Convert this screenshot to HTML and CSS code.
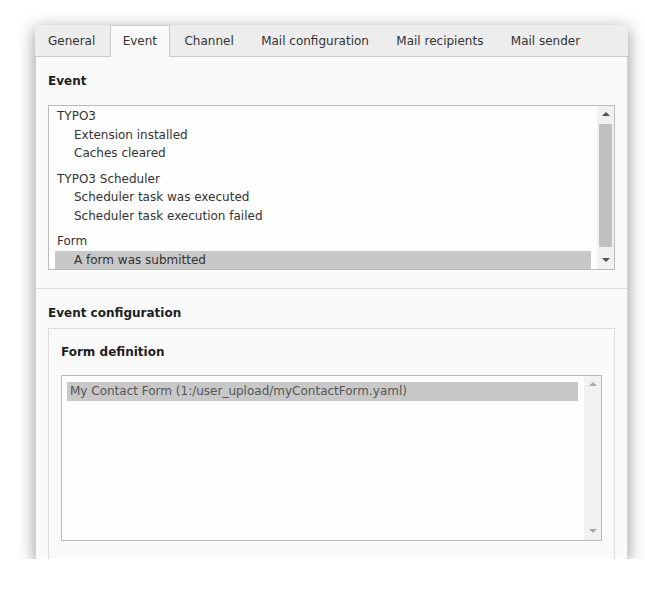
FILE: index.html
```html
<!DOCTYPE html>
<html lang="en">
<head>
<meta charset="utf-8">
<title>Notification</title>
<link rel="stylesheet" href="styles.css">
</head>
<body>
<div class="panel">
  <div class="tabs">
    <div class="tab">General</div>
    <div class="tab active">Event</div>
    <div class="tab">Channel</div>
    <div class="tab">Mail configuration</div>
    <div class="tab">Mail recipients</div>
    <div class="tab">Mail sender</div>
  </div>
  <div class="content">
    <div class="section">
      <div class="label">Event</div>
      <div class="select select-events">
        <div class="list list-events">
          <div class="group">
            <div class="group-label">TYPO3</div>
            <div class="option">Extension installed</div>
            <div class="option">Caches cleared</div>
          </div>
          <div class="group">
            <div class="group-label">TYPO3 Scheduler</div>
            <div class="option">Scheduler task was executed</div>
            <div class="option">Scheduler task execution failed</div>
          </div>
          <div class="group">
            <div class="group-label">Form</div>
            <div class="option selected">A form was submitted</div>
          </div>
        </div>
        <div class="scrollbar">
          <div class="sb-btn up"><svg width="8" height="4" viewBox="0 0 8 4"><path d="M0 4L4 0L8 4Z"/></svg></div>
          <div class="sb-track"><div class="sb-thumb"></div></div>
          <div class="sb-btn down"><svg width="8" height="4" viewBox="0 0 8 4"><path d="M0 0L8 0L4 4Z"/></svg></div>
        </div>
      </div>
    </div>
    <div class="section section-config">
      <div class="label label-section">Event configuration</div>
      <div class="fieldset">
        <div class="label label-field">Form definition</div>
        <div class="select select-form">
          <div class="list list-form">
            <div class="form-option selected">My Contact Form (1:/user_upload/myContactForm.yaml)</div>
          </div>
          <div class="scrollbar scrollbar-disabled">
            <div class="sb-btn up"><svg width="8" height="4" viewBox="0 0 8 4"><path d="M0 4L4 0L8 4Z"/></svg></div>
            <div class="sb-track"></div>
            <div class="sb-btn down"><svg width="8" height="4" viewBox="0 0 8 4"><path d="M0 0L8 0L4 4Z"/></svg></div>
          </div>
        </div>
      </div>
    </div>
  </div>
</div>
</body>
</html>
```

FILE: styles.css
```css
* {
  box-sizing: border-box;
}

body {
  margin: 0;
  background: #ffffff;
  font-family: "DejaVu Sans", Verdana, sans-serif;
  font-size: 12px;
  color: #333333;
}

.panel {
  margin: 25px 0 0 35px;
  width: 593px;
  height: 534px;
  display: flex;
  flex-direction: column;
  overflow: hidden;
  background: #fafafa;
  box-shadow: 0 4px 16px rgba(0, 0, 0, 0.42);
}

.tabs {
  display: flex;
  background: #ededed;
  border-bottom: 1px solid #c8c8c8;
}

.tab {
  border: 1px solid transparent;
  border-bottom: 0;
  margin-bottom: -1px;
  margin-right: 1.4px;
  padding: 0 12px 1px;
  line-height: 30px;
  color: #333333;
  white-space: nowrap;
}

.tab.active {
  background: #fafafa;
  border-color: #cdcdcd;
}

.content {
  flex: 1;
  border-left: 1px solid #d2d2d2;
  border-right: 1px solid #d2d2d2;
}

.section {
  padding: 15px 12px 18px;
}

.section-config {
  border-top: 1px solid #dcdcdc;
  padding: 15px 12px 0;
}

.label {
  font-weight: bold;
  line-height: 18px;
  margin-bottom: 15px;
  color: #1e1e1e;
}

.label-section {
  margin-bottom: 6px;
}

.fieldset {
  border: 1px solid #dcdcdc;
  padding: 14px 12px 40px;
}

.label-field {
  margin-bottom: 14px;
}

.select {
  display: flex;
  border: 1px solid #bbbbbb;
  background: #fefefe;
}

.select-events {
  height: 165px;
}

.select-form {
  height: 166px;
}

.list {
  flex: 1;
  overflow: hidden;
  padding: 0 6px;
}

.list-events {
  padding-top: 1px;
}

.list-form {
  padding: 6px 6px 0 5px;
}

.group + .group {
  margin-top: 7px;
}

.group-label {
  line-height: 18.5px;
  padding-left: 2px;
  white-space: nowrap;
}

.option {
  line-height: 18.5px;
  padding-left: 19px;
  white-space: nowrap;
}

.selected {
  background: #c8c8c8;
}

.form-option {
  line-height: 19px;
  padding-left: 3px;
  color: #555555;
  white-space: nowrap;
}

.scrollbar {
  width: 17px;
  display: flex;
  flex-direction: column;
  background: #f1f1f1;
  color: #505050;
}

.scrollbar-disabled {
  color: #a8a8a8;
}

.sb-btn {
  height: 17px;
  display: flex;
  align-items: center;
  justify-content: center;
}

.sb-btn svg {
  display: block;
  fill: currentColor;
}

.sb-btn.down {
  padding-bottom: 2px;
}

.sb-btn.up {
  padding-bottom: 1px;
}

.sb-track {
  flex: 1;
  padding: 1px 2px;
}

.sb-thumb {
  height: 123px;
  background: #c1c1c1;
}
```
